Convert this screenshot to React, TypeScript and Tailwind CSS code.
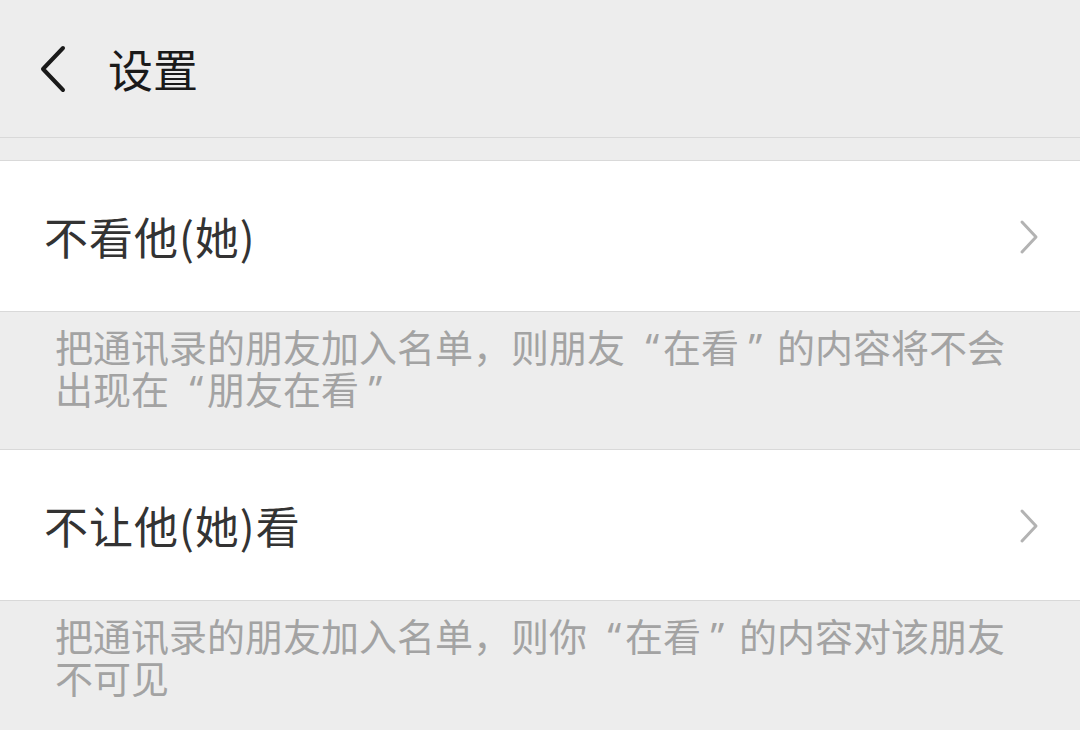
const font = { fontFamily: '"Noto Sans CJK SC", "Noto Sans", sans-serif' };

function Row({ title }: { title: string }) {
  return (
    <div className="flex h-[152px] items-center justify-between border-y border-[#d9d9d9] bg-white pl-[44px] pr-[41px]">
      <span className="text-[44px] leading-none tracking-[1px] text-[#333333]">{title}</span>
      <svg width="20" height="36" viewBox="0 0 20 36" fill="none" className="mt-[1px]">
        <path d="M3 3 L17 18 L3 33" stroke="#b3b3b3" strokeWidth="3" strokeLinecap="round" strokeLinejoin="round" />
      </svg>
    </div>
  );
}

// quote marks sit in their own cells, like the reference's punctuation
function L() {
  return <span className="inline-block h-[42px] w-[1em] pr-[0.1em] text-right align-top" style={{ fontFamily: '"Noto Sans", sans-serif' }}>“</span>;
}
function R() {
  return <span className="inline-block h-[42px] w-[1em] pl-[0.25em] text-left align-top" style={{ fontFamily: '"Noto Sans", sans-serif' }}>”</span>;
}

function Note({ children }: { children: React.ReactNode }) {
  return (
    <div className="h-[137px] bg-[#ededed] pl-[55px] pr-[40px] pt-[13px] text-[38px] leading-[42px] text-[#a3a3a3]">
      {children}
    </div>
  );
}

export default function App() {
  return (
    <div className="h-[730px] w-[1080px] overflow-hidden bg-[#ededed]" style={font}>
      <header className="flex h-[138px] items-center border-b border-[#d9d9d9] bg-[#ededed]">
        <svg width="34" height="52" viewBox="0 0 34 52" fill="none" className="ml-[36px]">
          <path d="M27 5 L7 26 L27 47" stroke="#1a1a1a" strokeWidth="4" strokeLinecap="round" strokeLinejoin="round" />
        </svg>
        <h1 className="ml-[38px] text-[45px] font-normal leading-none text-[#1a1a1a]">设置</h1>
      </header>
      <div className="h-[22px]" />
      <Row title="不看他(她)" />
      <Note>
        <p>把通讯录的朋友加入名单，则朋友<L />在看<R />的内容将不会</p>
        <p>出现在<L />朋友在看<R /></p>
      </Note>
      <Row title="不让他(她)看" />
      <Note>
        <p>把通讯录的朋友加入名单，则你<L />在看<R />的内容对该朋友</p>
        <p>不可见</p>
      </Note>
    </div>
  );
}
